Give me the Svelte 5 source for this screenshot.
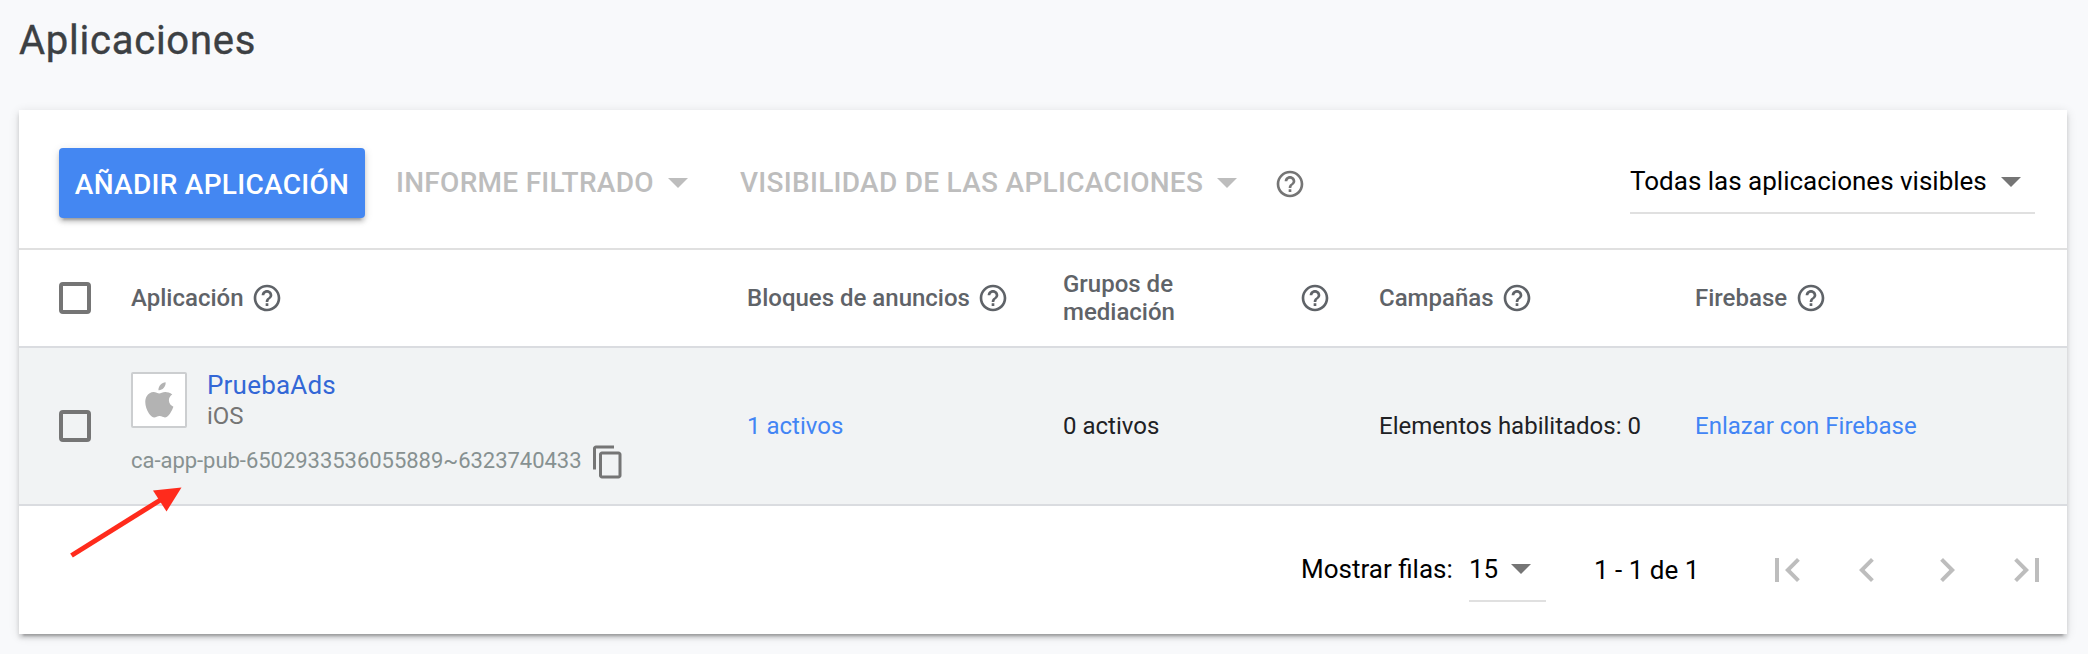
<script>
  const columns = ['Aplicación', 'Bloques de anuncios', 'Grupos de mediación', 'Campañas', 'Firebase'];
  const pager = [
    'M18.41 16.59 13.82 12l4.59-4.59L17 6l-6 6 6 6zM6 6h2v12H6z',
    'M15.41 7.41 14 6l-6 6 6 6 1.41-1.41L10.83 12z',
    'M10 6 8.59 7.41 13.17 12l-4.58 4.59L10 18l6-6z',
    'M5.59 7.41 10.18 12l-4.59 4.59L7 18l6-6-6-6zM16 6h2v12h-2z'
  ];
</script>

{#snippet help()}
  <svg class="help" viewBox="0 0 24 24"><path d="M11 18h2v-2h-2v2zm1-16C6.48 2 2 6.48 2 12s4.48 10 10 10 10-4.480 10-10S17.520 2 12 2zm0 18c-4.410 0-8-3.590-8-8s3.590-8 8-8 8 3.590 8 8-3.590 8-8 8zm0-14c-2.210 0-4 1.790-4 4h2c0-1.100.9-2 2-2s2 .9 2 2c0 2-3 1.750-3 5h2c0-2.250 3-2.500 3-5 0-2.210-1.790-4-4-4z" /></svg>
{/snippet}

<main>
  <h1>Aplicaciones</h1>
  <section class="card">
    <div class="toolbar">
      <button class="add">AÑADIR APLICACIÓN</button>
      <button class="menu report">INFORME FILTRADO<i class="caret"></i></button>
      <button class="menu visibility">VISIBILIDAD DE LAS APLICACIONES<i class="caret"></i></button>
      <span class="toolhelp">{@render help()}</span>
      <div class="select filter"><span>Todas las aplicaciones visibles</span><i class="caret"></i></div>
    </div>

    <div class="grid head">
      <span class="check"></span>
      {#each columns as label, i}
        <div class="th" class:wrap={i === 2}><span>{label}</span>{@render help()}</div>
      {/each}
    </div>

    <div class="grid row">
      <span class="check"></span>
      <div class="app">
        <div class="identity">
          <div class="logo">
            <svg viewBox="0 0 30 36"><path d="M21.600 0.300C21.900 2.500 20.900 4.600 19.600 6.100 18.300 7.600 16.400 8.500 14.500 8.300 14.200 6.200 15.200 4.200 16.500 2.800 17.800 1.400 19.900 0.400 21.600 0.300ZM28.300 12.400C26.200 13.700 24.900 15.700 24.900 18.300 24.900 21.300 26.700 23.600 29.400 24.700 28.700 26.900 27.600 29.100 26.200 31.200 24.800 33.200 23.400 35.400 21.100 35.400 18.900 35.500 18.200 34.100 15.600 34.100 13.100 34.100 12.200 35.400 10.100 35.500 7.900 35.600 6.300 33.400 4.800 31.300 1.900 27.100 -0.300 19.400 2.700 14.300 4.200 11.800 6.800 10.200 9.600 10.100 11.800 10.100 13.900 11.600 15.200 11.600 16.500 11.600 19.100 9.800 21.700 10 22.900 10.100 26.200 10.500 28.300 12.400Z" /></svg>
          </div>
          <div class="names"><a class="name">PruebaAds</a><span class="os">iOS</span></div>
        </div>
        <div class="id">
          <span>ca-app-pub-6502933536055889~6323740433</span>
          <svg viewBox="0 0 24 24"><path d="M16 1H4c-1.100 0-2 .9-2 2v14h2V3h12V1zm3 4H8c-1.100 0-2 .9-2 2v14c0 1.100.9 2 2 2h11c1.100 0 2-.9 2-2V7c0-1.100-.9-2-2-2zm0 16H8V7h11v14z" /></svg>
        </div>
      </div>
      <a class="link">1 activos</a>
      <span>0 activos</span>
      <span>Elementos habilitados: 0</span>
      <a class="link">Enlazar con Firebase</a>
    </div>

    <div class="footer">
      <span class="rows">Mostrar filas:</span>
      <div class="select count"><span>15</span><i class="caret"></i></div>
      <span class="range">1 - 1 de 1</span>
      <nav>
        {#each pager as d}
          <svg viewBox="0 0 24 24"><path {d} /></svg>
        {/each}
      </nav>
    </div>
  </section>
  <svg class="arrow" viewBox="0 0 120 80"><path d="M4.500 67.500 L95 11" /><polygon points="86,2.500 114.500,-0.500 99.500,23.500" /></svg>
</main>

<style>
  :global(body) { background: #f8f9fb; }
  main {
    position: relative;
    box-sizing: border-box;
    width: 2088px;
    height: 654px;
    padding: 0 21px 0 19px;
    overflow: hidden;
    font-family: Roboto, sans-serif;
    background: #f8f9fb;
  }
  h1 {
    margin: 0;
    height: 110px;
    box-sizing: border-box;
    padding-top: 17px;
    font-size: 40px;
    line-height: 48px;
    font-weight: 400;
    letter-spacing: 0.75px;
    color: #3c4043;
    -webkit-text-stroke: 0.4px #3c4043;
  }
  .card {
    height: 524px;
    background: #fff;
    box-shadow: 0 4px 4px rgba(0,0,0,.14), 0 6px 2px -4px rgba(0,0,0,.2), 0 2px 10px rgba(0,0,0,.12);
  }
  button { border: 0; background: none; padding: 0; font: 500 28px/32px Roboto, sans-serif; letter-spacing: .28px; white-space: nowrap; }
  .toolbar {
    display: flex;
    box-sizing: border-box;
    height: 140px;
    border-bottom: 2px solid #e0e0e0;
    padding: 38px 32px 0 40px;
  }
  .add {
    width: 306px;
    height: 70px;
    padding-top: 4px;
    border-radius: 4px;
    background: #4487f2;
    color: #fff;
    box-shadow: 0 4px 4px rgba(0,0,0,.16), 0 6px 2px -4px rgba(0,0,0,.2), 0 2px 10px rgba(0,0,0,.12);
  }
  .menu { display: flex; justify-content: space-between; align-items: center; height: 70px; color: #bdbdbd; }
  .report { width: 292px; margin-left: 31px; }
  .visibility { width: 497px; margin-left: 52px; }
  .caret { border: 10px solid transparent; border-top-color: currentColor; border-bottom: 0; }
  .help { display: block; flex: none; width: 32px; height: 32px; fill: #5f6368; }
  .toolhelp { margin: 20px 0 0 37px; }
  .toolhelp .help { fill: #757575; }
  .select { display: flex; justify-content: space-between; align-items: center; box-sizing: border-box; border-bottom: 2px solid #e0e0e0; font-size: 26px; white-space: nowrap; }
  .select .caret { color: #757575; }
  .filter { width: 405px; height: 66px; margin-left: auto; padding: 4px 14px 0 0; }
  .filter span { margin-top: -2px; }
  .grid {
    display: grid;
    grid-template-columns: 72px 616px 316px 316px 316px 1fr;
    align-items: center;
    box-sizing: border-box;
    padding-left: 40px;
    font-size: 24px;
    white-space: nowrap;
    color: #202124;
  }
  .head { height: 98px; border-bottom: 2px solid #dadce0; }
  .row { height: 158px; border-bottom: 2px solid #dadce0; background: #f1f3f4; }
  .check { box-sizing: border-box; width: 32px; height: 32px; border: 4px solid #757575; border-radius: 4px; }
  .th { display: flex; align-items: center; gap: 7.5px; font-weight: 500; line-height: 28px; color: #5f6368; }
  .wrap { justify-content: space-between; padding-right: 48px; }
  .wrap span { width: 140px; white-space: normal; }
  .app { align-self: start; padding-top: 24px; }
  .identity { display: flex; }
  .logo { display: flex; align-items: center; justify-content: center; box-sizing: border-box; width: 56px; height: 56px; border: 2px solid #ccced0; border-radius: 2px; background: #fff; }
  .logo svg { width: 30px; height: 36px; fill: #b3b3b3; }
  .names { display: flex; flex-direction: column; margin-left: 20px; }
  .name { font-size: 26px; line-height: 30px; margin-top: -2px; color: #3367d6; letter-spacing: .2px; }
  .os { line-height: 30px; margin-top: 1px; color: #757575; }
  .id { display: flex; align-items: center; height: 40px; margin-top: 11px; font-size: 22px; letter-spacing: -.03px; color: #879191; }
  .id span { width: 459px; margin-top: -4px; }
  .id svg { width: 36px; height: 36px; margin-top: -1px; fill: #757575; }
  .link { color: #4285f4; }
  .footer { display: flex; height: 128px; font-size: 26px; line-height: 30px; color: #000; white-space: nowrap; }
  .footer > * { flex: none; }
  .rows { width: 168px; margin: 48px 0 0 1282px; }
  .count { box-sizing: border-box; width: 77px; height: 66px; margin-top: 30px; padding: 2px 15px 0 0; }
  .range { width: 169px; margin: 49px 0 0 48px; }
  nav { display: flex; gap: 32px; margin-top: 40px; }
  nav svg { flex: none; width: 48px; height: 48px; fill: #bdbdbd; }
  .arrow { position: absolute; left: 67px; top: 488px; width: 120px; height: 80px; overflow: visible; fill: #ff2b1c; stroke: #ff2b1c; }
  .arrow path { stroke-width: 5; }
  .arrow polygon { stroke: none; }
</style>
